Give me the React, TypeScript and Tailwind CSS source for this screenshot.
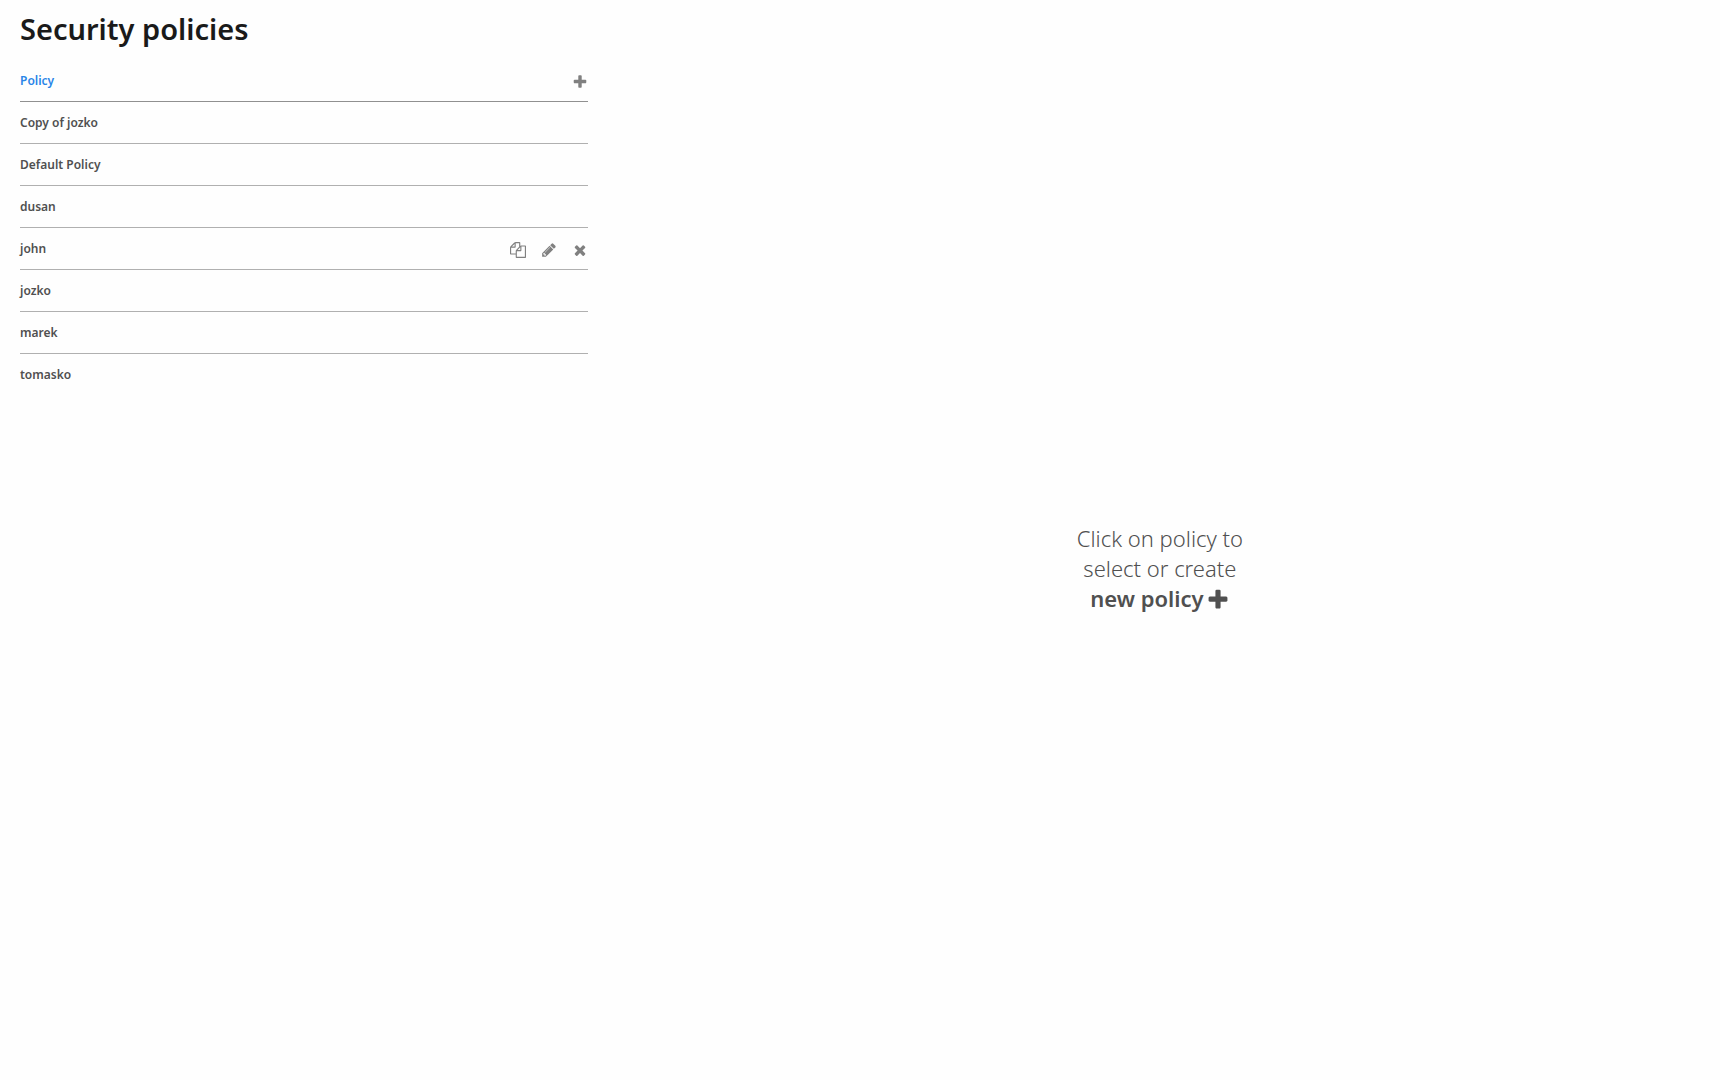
import React, { useState } from "react";

interface IconProps {
  path: string;
  className?: string;
}

interface PolicyRowProps {
  name: string;
  active: boolean;
  onSelect: () => void;
}

const PLUS =
  "M1600 736v192q0 40-28 68t-68 28h-416v416q0 40-28 68t-68 28h-192q-40 0-68-28t-28-68v-416h-416q-40 0-68-28t-28-68v-192q0-40 28-68t68-28h416v-416q0-40 28-68t68-28h192q40 0 68 28t28 68v416h416q40 0 68 28t28 68z";
const TIMES =
  "M1490 1322q0 40-28 68l-136 136q-28 28-68 28t-68-28l-294-294-294 294q-28 28-68 28t-68-28l-136-136q-28-28-28-68t28-68l294-294-294-294q-28-28-28-68t28-68l136-136q28-28 68-28t68 28l294 294 294-294q28-28 68-28t68 28l136 136q28 28 28 68t-28 68l-294 294 294 294q28 28 28 68z";
const PENCIL =
  "M491 1536l91-91-235-235-91 91v107h128v128h107zm523-928q0-22-22-22-10 0-17 7l-542 542q-7 7-7 17 0 22 22 22 10 0 17-7l542-542q7-7 7-17zm-54-192l416 416-832 832h-416v-416zm683 96q0 53-37 90l-166 166-416-416 166-165q36-38 90-38 53 0 91 38l235 234q37 39 37 91z";
const COPY =
  "M1696 384q40 0 68 28t28 68v1216q0 40-28 68t-68 28h-960q-40 0-68-28t-28-68v-288h-544q-40 0-68-28t-28-68v-672q0-40 20-88t48-76l408-408q28-28 76-48t88-20h416q40 0 68 28t28 68v328q68-40 128-40h416zm-544 213l-299 299h299v-299zm-640-384l-299 299h299v-299zm196 647l316-316v-416h-384v416q0 40-28 68t-68 28h-416v640h512v-256q0-40 20-88t48-76zm956 804v-1152h-384v416q0 40-28 68t-68 28h-416v640h896z";

const policies = [
  "Copy of jozko",
  "Default Policy",
  "dusan",
  "john",
  "jozko",
  "marek",
  "tomasko",
];

const Icon: React.FC<IconProps> = ({ path, className = "size-4" }) => (
  <svg viewBox="0 0 1792 1792" fill="currentColor" className={className} aria-hidden="true">
    <path d={path} />
  </svg>
);

const PolicyRow: React.FC<PolicyRowProps> = ({ name, active, onSelect }) => (
  <li
    onMouseEnter={onSelect}
    className="flex h-[42px] items-center justify-between border-b border-[#b0b0b0] last:border-transparent"
  >
    <button type="button" className="flex-1 text-left">
      {name}
    </button>
    {active && (
      <div className="flex gap-[15px] pt-0.5 text-[#808080]">
        <button type="button" aria-label={`Copy ${name}`}>
          <Icon path={COPY} />
        </button>
        <button type="button" aria-label={`Edit ${name}`}>
          <Icon path={PENCIL} />
        </button>
        <button type="button" aria-label={`Delete ${name}`}>
          <Icon path={TIMES} />
        </button>
      </div>
    )}
  </li>
);

export default function App() {
  const [hovered, setHovered] = useState("john");

  return (
    <div className="flex min-h-screen flex-col bg-[#fefefe] pl-5 font-['Noto_Sans','Open_Sans',sans-serif] text-[#505050]">
      <h1 className="flex h-[60px] items-center pb-0.5 text-[29px] font-semibold text-[#1a1a1a]">
        Security policies
      </h1>

      <main className="grid flex-1 grid-cols-[33.4%_1fr]">
        <section className="text-xs font-semibold">
          <header className="flex h-[42px] items-center justify-between border-b border-[#909090]">
            <h2 className="text-[#2a85e8]">Policy</h2>
            <button type="button" aria-label="Add policy" className="pt-0.5 text-[#808080]">
              <Icon path={PLUS} />
            </button>
          </header>
          <ul>
            {policies.map((name) => (
              <PolicyRow
                key={name}
                name={name}
                active={name === hovered}
                onSelect={() => setHovered(name)}
              />
            ))}
          </ul>
        </section>

        <section className="flex items-center justify-center pb-1 pl-3 text-center text-[22px] leading-[30px]">
          <div>
            <p className="font-light">
              Click on policy to
              <br />
              select or create
            </p>
            <button type="button" className="inline-flex items-center gap-0.5 font-semibold">
              new policy
              <Icon path={PLUS} className="mt-1 size-6" />
            </button>
          </div>
        </section>
      </main>
    </div>
  );
}
